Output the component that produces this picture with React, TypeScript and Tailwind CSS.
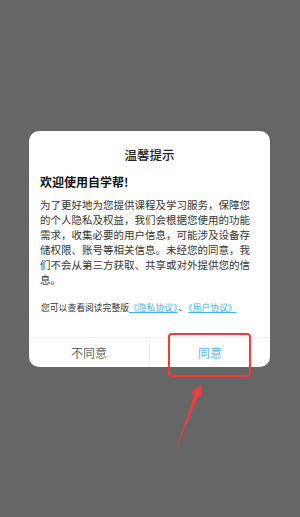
import React from "react";

const lines = [
  "为了更好地为您提供课程及学习服务，保障您",
  "的个人隐私及权益，我们会根据您使用的功能",
  "需求，收集必要的用户信息，可能涉及设备存",
  "储权限、账号等相关信息。未经您的同意，我",
  "们不会从第三方获取、共享或对外提供您的信",
  "息。",
];

export default function App() {
  return (
    <div
      className="relative h-[517px] w-[300px] overflow-hidden bg-[#666666]"
      style={{ fontFamily: '"Noto Sans CJK SC", "Noto Sans", sans-serif' }}
    >
      <div className="ml-[29px] mt-[131px] w-[241px] overflow-hidden rounded-[10px] bg-white">
        <div className="pt-[16px] text-center text-[12.5px] font-medium leading-[16px] text-[#222]">
          温馨提示
        </div>
        <div className="mt-[11px] px-[11px] text-[12px] font-bold leading-[16px] text-[#111]">
          欢迎使用自学帮!
        </div>
        <div className="mt-[6.5px] px-[11px] text-[10.5px] leading-[15px] text-[#333]">
          {lines.map((l) => (
            <div key={l} className="whitespace-nowrap">
              {l}
            </div>
          ))}
        </div>
        <div className="mt-[15.5px] whitespace-nowrap px-[12px] text-[8.8px] leading-[12px] text-[#333]">
          您可以查看阅读完整版
          <span className="text-[#3fb2ee] underline decoration-[#3fb2ee]">《隐私协议》</span>
          <span className="mx-[1px]">、</span>
          <span className="text-[#3fb2ee] underline decoration-[#3fb2ee]">《用户协议》</span>
        </div>
        <div className="mt-[23px] flex h-[30px] border-t border-[#eeeeee]">
          <div className="flex flex-1 items-center justify-center border-r border-[#f0f0f0] text-[12px] text-[#666]">
            不同意
          </div>
          <div className="flex flex-1 items-center justify-center text-[12px] text-[#4fb4ec]">
            同意
          </div>
        </div>
      </div>

      <div className="pointer-events-none absolute left-[168px] top-[333px] h-[44px] w-[83px] rounded-[4px] border-2 border-[#f23b3b]" />
      <svg
        className="pointer-events-none absolute left-0 top-0"
        width="300"
        height="517"
        viewBox="0 0 300 517"
      >
        <polygon
          points="201,385 201.5,397 198.2,395.6 175,452 194.6,394.2 190.5,393"
          fill="#f23b3b"
        />
      </svg>
    </div>
  );
}
